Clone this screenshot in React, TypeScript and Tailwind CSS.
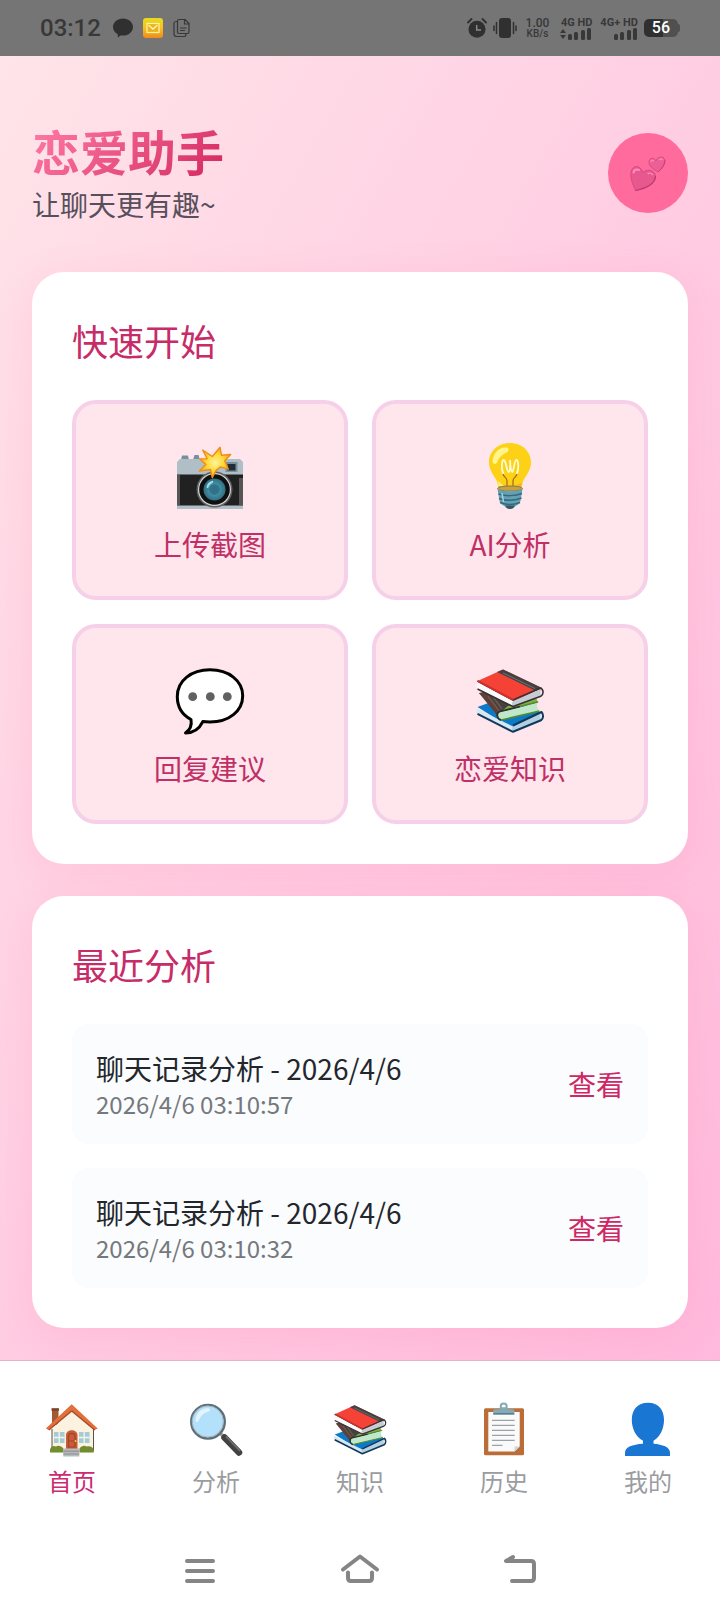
import type { ReactNode } from "react";

function CameraIcon() {
  return (
    <svg viewBox="0 0 72 72" className="size-[72px]" aria-hidden="true">
      <defs>
        <radialGradient id="burst">
          <stop offset="0" stopColor="#fff59d" />
          <stop offset=".55" stopColor="#ffd93b" />
          <stop offset="1" stopColor="#f9a825" />
        </radialGradient>
        <radialGradient id="lens">
          <stop offset="0" stopColor="#2f6f85" />
          <stop offset=".45" stopColor="#327489" />
          <stop offset=".5" stopColor="#428fa5" />
          <stop offset="1" stopColor="#316f82" />
        </radialGradient>
      </defs>
      <path d="M7 20l1-4.500h6l1 4.500zM19 20l1.500-5h4L26 20z" fill="#78909c" />
      <path d="M6 19h60l3 3v13H3V22z" fill="#b0bec5" />
      <path d="M3 34.500h66V66H3z" fill="#212121" />
      <path d="M3 35h3v30H3zM65 38h4v27h-4z" fill="#555" />
      <path d="M3 65.500h66V69H3z" fill="#b0bec5" />
      <rect x="51.500" y="22" width="12" height="10" fill="#78909c" />
      <rect x="53.500" y="24" width="8" height="6.500" fill="#212c33" />
      <circle cx="40.500" cy="49.500" r="18" fill="#616161" />
      <circle cx="40.500" cy="49.500" r="16.500" fill="#d0d4d6" />
      <circle cx="40.500" cy="49.500" r="15.300" fill="#101010" />
      <circle cx="40.500" cy="49.500" r="11" fill="url(#lens)" />
      <path d="M32.500 47c.6-3.500 3-5.800 6.300-6.300 1 .8.400 1.700-1 2.600-1.900 1.200-2.900 2.600-3.400 4.200-.6.900-1.700.7-1.900-.5z" fill="#a5dbe8" />
      <path d="M46 7.300l1.500 7.900 9.200-.7-6 6.300 3.600 8.400-7.600-2.300-4.700 3.500-3.700 7.400-1.800-8.300-11.200 1.600 6.600-6.500-6-5.700 7.200-.2-4.400-8.700 9.700 6.500z" fill="url(#burst)" stroke="#ef8e12" strokeWidth="1.400" strokeLinejoin="round" />
    </svg>
  );
}

function BulbIcon() {
  return (
    <svg viewBox="0 0 72 72" className="size-[72px]" aria-hidden="true">
      <path d="M36 3c12 0 21 8.500 21 19.300 0 7.700-4.500 12.700-7 17.200-1.700 3-1.700 5-2.500 8.500h-23c-.8-3.500-.8-5.500-2.500-8.500-2.500-4.500-7-9.500-7-17.500C15 11.500 24 3 36 3z" fill="#fdd216" />
      <path d="M24 42c4 5 20 5 24 0l-1 6H25z" fill="#f5b32a" />
      <path d="M18.500 21.500C19 13 25.500 6.500 33 7.500c3 1.200 1.500 4-1.500 5.500-4 2-7 5-8 8.500-.8 3-4.800 3.500-5 0z" fill="#fff58a" />
      <path d="M24 41l6 5h-5.500z" fill="#fff176" />
      <path d="M29.500 33.500c-2-3-2.300-13.500.2-13.500s2.800 12 5 12 1.300-12 1.300-12 .8 12 2.300 12 1.700-12 4.200-12 2 10.500.3 13.500" fill="none" stroke="#fffad0" strokeWidth="1.800" strokeLinecap="round" />
      <path d="M29 34c1 4 4 3 4 7v5M43 34c-1 4-4 3-4 7v5" fill="none" stroke="#a66a12" strokeWidth="1.200" />
      <ellipse cx="36" cy="48.500" rx="12.500" ry="2.500" fill="#c9a13b" stroke="#8a795a" strokeWidth="1" />
      <path d="M23.500 49c5 3 20 3 25 0l-2 12c-.8 3-3 4-5 5-1.500 2-2.500 3-5.500 3s-4-1-5.500-3c-2-1-4.200-2-5-5z" fill="#62a1b4" />
      <path d="M24.500 54c7 2.500 17 2 23.500-.5M25 58.500c7 2.500 16 2 22.500-.5M26 62.500c6 2.500 14 2.500 20 0" fill="none" stroke="#34697c" strokeWidth="1.500" />
      <path d="M31 65.500h10c-1.500 2.500-3 3.500-5 3.500s-3.500-1-5-3.500z" fill="#3b5260" />
      <path d="M28 53l1.500 9" stroke="#a8d3de" strokeWidth="1.500" />
    </svg>
  );
}

function ChatIcon() {
  return (
    <svg viewBox="0 0 72 72" className="size-[72px]" aria-hidden="true">
      <path d="M36 5.800c18.500 0 32.700 10.700 32.700 26S55 58 36 58c-2.600 0-5-.1-7.200-.4-2.500 5.200-7.300 11.300-17.300 11.400 5-3.500 6.400-8.500 5.500-13.500C8.500 51 3.300 43 3.300 32.500 3.300 16.500 17.500 5.800 36 5.800z" fill="#fff" stroke="#000" strokeWidth="3" strokeLinejoin="round" />
      <g fill="#5f6163">
        <circle cx="18.700" cy="32.700" r="4.400" />
        <circle cx="36.300" cy="32.700" r="4.400" />
        <circle cx="53.300" cy="32.700" r="4.400" />
      </g>
    </svg>
  );
}

function BooksIcon({ className }: { className: string }) {
  return (
    <svg viewBox="0 0 72 72" className={className} aria-hidden="true">
      <path d="M3.500 43L28 34l40 15-29 16z" fill="#0b7bc9" />
      <path d="M3.500 45L39 62.500 68.500 48c-2 3-2 5.500 0 8.500L39.500 68 3.500 51c-1.500-2-1.500-4 0-6z" fill="#d5e8f3" />
      <path d="M39 62l28.500-13.500c-2 3-2 5 .5 8L39.500 68c-2-2-2-4-.5-6z" fill="#b3d0e3" />
      <path d="M3.500 49.800L39 67.800l28-11.500c2.500-1.500 2.800-6 .5-8.300L39 61.500" fill="none" stroke="#12395c" strokeWidth="2" strokeLinejoin="round" />
      <path d="M5 29l18-4 42 13-42 12-12-15z" fill="#424242" />
      <path d="M5 29l18.500 23 3-4-14-19z" fill="#5d4037" />
      <path d="M14 32l12 16M19 33l9 12" stroke="#795548" strokeWidth="1.500" />
      <path d="M34 42l28-8 2 4-36 9z" fill="#7cb342" />
      <path d="M25 48l38.500-9c-1 3 0 5.500 2 8L27 56c-3.500-1-4.500-5.500-2-8z" fill="#bfe8cb" />
      <path d="M46 42.500L26 47.500c-4 1-3.500 7.500 1 8.500" fill="none" stroke="#303030" strokeWidth="1.800" />
      <path d="M27 56l38.500-9M46 42.500L63.500 38" stroke="#558b2f" strokeWidth="1.500" />
      <path d="M3.500 17L29 5.500 68 24 39.500 38z" fill="#f44336" />
      <path d="M23 8l6-2.500 39 18.500-6 3z" fill="#424242" />
      <path d="M29 9l32 15.500" stroke="#6b6b6b" strokeWidth="1.200" />
      <path d="M3.500 18L39 36.500v6L3.500 25c-1.300-2-1.300-5 0-7z" fill="#fafafa" />
      <path d="M39 37l28.500-12c-1.500 2.500-1.500 5 .5 7L39 42.500c-1.500-2-1.500-4 0-5.500z" fill="#c3ced4" />
      <path d="M3.500 17L39 36l27-11.800c3.800.3 4 6.500.8 8L39 42.500 3.500 25" fill="none" stroke="#3b3033" strokeWidth="1.600" strokeLinejoin="round" />
      <path d="M3.500 17L39 36" stroke="#d32f2f" strokeWidth="1.800" />
    </svg>
  );
}

function HouseIcon() {
  return (
    <svg viewBox="0 0 56 56" className="size-14" aria-hidden="true">
      <path d="M8 7.500h6.500V24H8z" fill="#a15a32" />
      <path d="M7.500 7.300h7.500v2.500H7.500z" fill="#7b4427" />
      <path d="M8 28L27.700 9 49.500 28v23.500H8z" fill="#fbf3df" />
      <path d="M8 28v22M49.500 28v22" stroke="#5d5148" strokeWidth="1" />
      <path d="M27.700 3.300L1.800 27.500l3 1.500L27.700 10l23 19 3-1.500z" fill="#e2703a" />
      <path d="M27.700 10L4.800 29M27.700 10l23 19" stroke="#a8492a" strokeWidth="1.300" />
      <g fill="#a5cbd3">
        <path d="M10 31h10.500v11H10zM35 31h10.500v11H35z" />
      </g>
      <path d="M15.200 31v11M10 36.500h10.500M40.200 31v11M35 36.500h10.500" stroke="#f5f5ee" strokeWidth="1.300" />
      <path d="M22 48V34c0-6.500 11.500-6.500 11.500 0v14z" fill="#c95b38" />
      <path d="M24.500 46V35c0-3.500 6.500-3.500 6.500 0v11zM24.500 40H31" fill="none" stroke="#a2452b" strokeWidth="1.200" />
      <circle cx="31.500" cy="40" r="1" fill="#ffca28" />
      <path d="M6 51.500v-3c1-4 4-4 6-3 2-1.500 5-1 7.500 2v4zM35.500 51.500v-4c2-3 5-3.500 7-2 3-1 6 0 7.300 3v3z" fill="#728c2f" />
      <path d="M19.300 47.500h16v8h-16z" fill="#b8babb" />
      <path d="M19.300 50.200h16M19.300 53h16" stroke="#898c8e" strokeWidth="1" />
    </svg>
  );
}

function MagnifierIcon() {
  return (
    <svg viewBox="0 0 56 56" className="size-14" aria-hidden="true">
      <path d="M31 31l5 5" stroke="#9e9e9e" strokeWidth="3.500" />
      <path d="M36.500 36.500l14.500 15" stroke="#424242" strokeWidth="6.500" strokeLinecap="round" />
      <path d="M38 35.500L52 50" stroke="#757575" strokeWidth="1.500" />
      <circle cx="20" cy="20.700" r="16.800" fill="#b3e0fb" stroke="#5f6f78" strokeWidth="2.400" />
      <circle cx="19.700" cy="20.500" r="15.600" fill="none" stroke="#a9b7bf" strokeWidth="1" />
      <path d="M7.500 19C8.500 11 15 6.500 21 7.500c2 .8 1 2.500-1 3.200-4.500 1.500-7.500 4-9 8.300-.8 2.500-3.500 2.500-3.500 0z" fill="#e1f4ff" />
    </svg>
  );
}

function ClipboardIcon() {
  return (
    <svg viewBox="0 0 56 56" className="size-14" aria-hidden="true">
      <rect x="8" y="7.300" width="40" height="47" rx="1.500" fill="#ba6d37" />
      <path d="M12.300 11h31.400v34.500L38.500 50.500H12.300z" fill="#fafafa" />
      <path d="M43.700 45.500l-5.200 5v-5z" fill="#d0d4d6" />
      <path d="M16 19.300h22.700M16 24.300h22.700M16 29.300h22.700M16 34.300h22.700M16 39.300h22.700M16 44.300h10.500" stroke="#9aa3a8" strokeWidth="1.200" />
      <circle cx="27.700" cy="5.500" r="3" fill="none" stroke="#82aab7" strokeWidth="2" />
      <path d="M17.300 13.500V9.800c0-1 .5-1.500 1.500-1.500h5l1.500-2h5l1.500 2h5c1 0 1.500.5 1.500 1.500v3.700z" fill="#82aab7" />
      <path d="M17.300 12.800h21" stroke="#547b89" strokeWidth="1.400" />
    </svg>
  );
}

function PersonIcon() {
  return (
    <svg viewBox="0 0 56 56" className="size-14" aria-hidden="true">
      <path d="M28 1.700c10.500 0 16 7 16 17 0 8.500-3.500 17-10.500 21v3.100c9 .7 16.500 3.200 16.500 9.200v3H5v-3c0-6 7.500-8.500 18-9.200v-3.100C15.500 35.700 11.800 27.200 11.800 18.700c0-10 5.700-17 16.200-17z" fill="#1976d2" />
    </svg>
  );
}

function HeartsIcon() {
  return (
    <svg viewBox="0 0 40 40" className="size-10" aria-hidden="true">
      <g stroke="#d2487f" strokeWidth=".8" strokeLinejoin="round">
        <path d="M7.500 37.500C4 30 1.500 23 3.500 17c2.500-5 9-5 11.500 2.500 5-4.500 12-2 12.500 3.500.5 7.500-9 12.500-20 14.500z" fill="#e7588f" />
        <path d="M30 19c-5-3-9.500-6-9-10.500.7-3.800 5-4.500 7-.7 1.500-4.500 7.500-5 8.700-1C37.500 11 34 15.500 30 19z" fill="#ec6096" />
      </g>
      <path d="M7.500 37.500c11-2 20-7 20-14.500" fill="none" stroke="#b93a6e" strokeWidth="1.100" />
      <path d="M30 19c4-3.500 7.500-8 6.700-12.200" fill="none" stroke="#c43f75" strokeWidth="1" />
      <path d="M5.500 19.500c.5-2.500 3-4 5.500-2.500" fill="none" stroke="#ff8fb8" strokeWidth="2" strokeLinecap="round" />
      <path d="M20 20.500c2-.8 3.500-.2 4.500 1M23 8.500c.3-1.200 1.500-1.500 2.500-.8M31.500 6.500c.8-.8 2-.8 2.700 0" fill="none" stroke="#ff8ab3" strokeWidth="1.400" strokeLinecap="round" />
    </svg>
  );
}

function SignalBars() {
  return (
    <svg viewBox="0 0 24 12" className="h-3 w-6" fill="#383838" aria-hidden="true">
      <rect x="0" y="6" width="4" height="6" rx="1.500" />
      <rect x="6" y="4" width="4" height="8" rx="1.500" />
      <rect x="13" y="2" width="4" height="10" rx="1.500" />
      <rect x="19" y="0" width="4" height="12" rx="1.500" />
    </svg>
  );
}

function StatusBar() {
  return (
    <div className="flex h-14 items-center justify-between bg-[#757575] px-10 font-['Roboto',sans-serif] text-[#383838]">
      <div className="flex items-center">
        <span className="text-2xl leading-8 font-medium">03:12</span>
        <svg viewBox="0 0 20 20" className="ml-3 size-5" fill="#303030" aria-hidden="true">
          <path d="M10 .5c5.600 0 10 3.700 10 8.500s-4.400 8.600-10 8.600c-.9 0-1.700 0-2.500-.2L4.800 19.500v-3.200C1.900 14.700 0 12 0 9 0 4.200 4.400.5 10 .5z" />
        </svg>
        <svg viewBox="0 0 20 20" className="ml-[10px] size-5" aria-hidden="true">
          <defs>
            <linearGradient id="mail" x1="0" y1="0" x2="0" y2="1">
              <stop offset="0" stopColor="#e6dc1e" />
              <stop offset=".5" stopColor="#f8c01e" />
              <stop offset="1" stopColor="#f08a1e" />
            </linearGradient>
          </defs>
          <rect width="20" height="20" rx="3" fill="url(#mail)" />
          <rect x="4" y="5.500" width="12" height="9" fill="#e9b321" stroke="#fff3a0" strokeWidth="1.200" />
          <path d="M5.500 7l4.500 4 4.500-4" fill="none" stroke="#fff6b5" strokeWidth="1.400" />
        </svg>
        <svg viewBox="0 0 18 20" className="ml-[10px] h-5 w-[18px]" fill="none" stroke="#383838" strokeWidth="1.200" strokeLinejoin="round" strokeLinecap="round" aria-hidden="true">
          <path d="M6 1.500h6l4 4V14c0 1-.5 1.500-1.500 1.500H6c-1 0-1.500-.5-1.500-1.500V3c0-1 .5-1.500 1.500-1.500zM11.500 1.500V6H16M4.500 3.500H3C2 3.500 1 4.500 1 5.500V16c0 1.500 1 2.500 2.500 2.500h8c1 0 1.500-1 1.500-3M7.500 10h5.500M7.500 12.500h4" />
        </svg>
      </div>
      <div className="flex items-center">
        <svg viewBox="0 0 20 20" className="size-5" aria-hidden="true">
          <circle cx="10" cy="11.200" r="8.500" fill="#303030" />
          <path d="M1 4.500L4.500 1M19 4.500L15.500 1" stroke="#303030" strokeWidth="1.800" strokeLinecap="round" />
          <path d="M9.700 7v5H14" fill="none" stroke="#8b8b8b" strokeWidth="1.500" />
        </svg>
        <svg viewBox="0 0 24 20" className="ml-[6px] h-5 w-6" aria-hidden="true">
          <rect x="6" y="0" width="12" height="20" rx="3" fill="#303030" />
          <path d="M3.500 4.500v11M1 8v4.500M20.500 4.500v11M23 8v4.500" stroke="#303030" strokeWidth="1.500" strokeLinecap="round" />
        </svg>
        <div className="ml-[9px] flex flex-col items-center font-medium">
          <span className="text-xs leading-[11px]">1.00</span>
          <span className="text-[10px] leading-[10px]">KB/s</span>
        </div>
        <div className="ml-[11px] flex flex-col items-end">
          <span className="text-[11px] leading-[11px] font-bold">4G HD</span>
          <div className="flex items-end gap-[2px]">
            <svg viewBox="0 0 6 10" className="mb-px h-[10px] w-[6px]" fill="#383838" aria-hidden="true">
              <path d="M3 0l3 4H0zM3 10L0 6h6z" />
            </svg>
            <SignalBars />
          </div>
        </div>
        <div className="ml-2 flex flex-col items-end">
          <span className="text-[11px] leading-[11px] font-bold">4G+ HD</span>
          <SignalBars />
        </div>
        <div className="ml-[6px] flex items-center">
          <span className="rounded-[5px] bg-linear-to-r from-[#303030] from-55% to-[#505050] to-55% px-2 text-base leading-[18px] font-medium text-white">56</span>
          <span className="h-2 w-[2px] rounded-r bg-[#505050]" />
        </div>
      </div>
    </div>
  );
}

function Card({ title, children }: { title: string; children: ReactNode }) {
  return (
    <section className="rounded-[32px] bg-white p-10 shadow-[0_8px_40px_rgba(255,107,157,0.14)]">
      <h2 className="mb-8 text-4xl leading-[56px] font-normal text-[#c72c68]">{title}</h2>
      {children}
    </section>
  );
}

const actions = [
  { label: "上传截图", icon: <CameraIcon /> },
  { label: "AI分析", icon: <BulbIcon /> },
  { label: "回复建议", icon: <ChatIcon /> },
  { label: "恋爱知识", icon: <BooksIcon className="size-[72px]" /> },
];

const records = [
  { title: "聊天记录分析 - 2026/4/6", time: "2026/4/6 03:10:57" },
  { title: "聊天记录分析 - 2026/4/6", time: "2026/4/6 03:10:32" },
];

const tabs = [
  { label: "首页", icon: <HouseIcon />, active: true },
  { label: "分析", icon: <MagnifierIcon />, active: false },
  { label: "知识", icon: <BooksIcon className="size-14" />, active: false },
  { label: "历史", icon: <ClipboardIcon />, active: false },
  { label: "我的", icon: <PersonIcon />, active: false },
];

export default function App() {
  return (
    <div className="flex min-h-screen flex-col bg-white font-['Noto_Sans_CJK_SC',sans-serif]">
      <StatusBar />
      <main className="flex-1 bg-[linear-gradient(120deg,#ffe4e9_0%,#ffcce2_52%,#ffb9dc_100%)] px-8 pb-8">
        <header className="flex items-center justify-between pt-[66px] pb-12">
          <div>
            <h1 className="w-fit bg-linear-135 from-[#ff7aa8] to-[#d3235f] bg-clip-text text-5xl leading-[56px] font-bold text-transparent">恋爱助手</h1>
            <p className="mt-[6px] text-[28px] leading-10 text-[#57505c]">让聊天更有趣~</p>
          </div>
          <div className="flex size-20 items-center justify-center rounded-full bg-[#ff6b9d]">
            <HeartsIcon />
          </div>
        </header>
        <div className="flex flex-col gap-8">
          <Card title="快速开始">
            <div className="grid grid-cols-2 gap-6">
              {actions.map((action) => (
                <button key={action.label} type="button" className="flex flex-col items-center gap-3 rounded-3xl border-4 border-[#f6d0e8] bg-[#ffe6ec] pt-9 pb-8 text-[28px] leading-10 text-[#c02f66]">
                  {action.icon}
                  {action.label}
                </button>
              ))}
            </div>
          </Card>
          <Card title="最近分析">
            <ul className="flex flex-col gap-6">
              {records.map((record) => (
                <li key={record.time} className="flex items-center justify-between rounded-2xl bg-[#fafcfe] p-6">
                  <div>
                    <p className="text-[28px] leading-10 text-[#23272d]">{record.title}</p>
                    <p className="text-2xl leading-8 text-[#75787c]">{record.time}</p>
                  </div>
                  <button type="button" className="text-[28px] leading-10 text-[#cf2763]">查看</button>
                </li>
              ))}
            </ul>
          </Card>
        </div>
      </main>
      <nav className="grid grid-cols-5 border-t border-[#e3b3cb] bg-white pt-10 pb-8">
        {tabs.map((tab) => (
          <a key={tab.label} href="#" className={tab.active ? "flex flex-col items-center gap-2 text-2xl leading-8 text-[#cc2a72]" : "flex flex-col items-center gap-2 text-2xl leading-8 text-[#9a9c9f]"}>
            {tab.icon}
            {tab.label}
          </a>
        ))}
      </nav>
      <div className="flex h-[83px] items-center justify-center gap-[120px] bg-white">
        <button type="button" aria-label="最近任务">
          <svg viewBox="0 0 40 40" className="size-10" fill="none" stroke="#858585" strokeWidth="4" strokeLinecap="round">
            <path d="M7 10h26M7 20h26M7 30h26" />
          </svg>
        </button>
        <button type="button" aria-label="主屏幕">
          <svg viewBox="0 0 40 40" className="size-10" fill="none" stroke="#858585" strokeWidth="4" strokeLinecap="round" strokeLinejoin="round">
            <path d="M3 18.500L20 5.500l17 13M8 21.500V27q0 3 3 3h18q3 0 3-3v-5.500" />
          </svg>
        </button>
        <button type="button" aria-label="返回">
          <svg viewBox="0 0 40 40" className="size-10" fill="none" stroke="#858585" strokeWidth="4" strokeLinecap="round" strokeLinejoin="round">
            <path d="M13 6L6 10h25q3 0 3 3v14q0 3-3 3H12" />
          </svg>
        </button>
      </div>
    </div>
  );
}
